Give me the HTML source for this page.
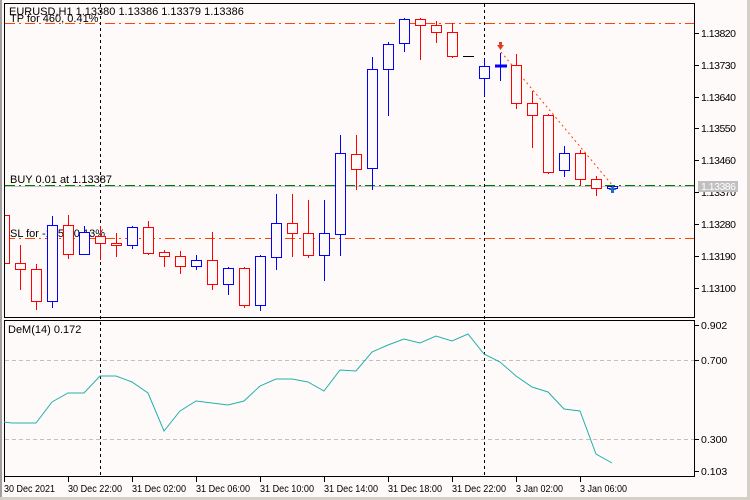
<!DOCTYPE html>
<html><head><meta charset="utf-8"><style>
html,body{margin:0;padding:0;background:#fffafa;}
svg{display:block;font-family:"Liberation Sans",sans-serif;font-size:11px;}
</style></head><body>
<svg width="750" height="500" viewBox="0 0 750 500" xmlns="http://www.w3.org/2000/svg">
<rect x="0" y="0" width="750" height="500" fill="#fffafa"/>
<rect x="0" y="0" width="2" height="500" fill="#a0a0a0"/>
<rect x="747" y="0" width="3" height="500" fill="#d4d0c8"/>
<rect x="0" y="497" width="750" height="3" fill="#d4d0c8"/>
<line x1="5" y1="360.5" x2="695" y2="360.5" stroke="#c0c0c0" stroke-dasharray="4,3"/>
<line x1="5" y1="439.5" x2="695" y2="439.5" stroke="#c0c0c0" stroke-dasharray="4,3"/>
<text x="9" y="15" fill="#000">EURUSD,H1  1.13380 1.13386 1.13379 1.13386</text>
<text x="10" y="22" fill="#000">TP for 460, 0.41%</text>
<text x="10" y="183" fill="#000">BUY 0.01 at 1.13387</text>
<text x="10" y="237" fill="#000">SL for -155, -0.13%</text>
<line x1="5" y1="23.5" x2="695" y2="23.5" stroke="#ff4500" stroke-dasharray="10,4,2,4"/>
<line x1="5" y1="186.5" x2="695" y2="186.5" stroke="#c0c0c0"/>
<line x1="5" y1="185.5" x2="695" y2="185.5" stroke="#008000" stroke-dasharray="10,4,2,4"/>
<line x1="5" y1="238.5" x2="695" y2="238.5" stroke="#ff4500" stroke-dasharray="10,4,2,4"/>
<line x1="100.5" y1="4" x2="100.5" y2="477" stroke="#000" stroke-dasharray="3,3"/>
<line x1="484.5" y1="4" x2="484.5" y2="477" stroke="#000" stroke-dasharray="3,3"/>
<line x1="501" y1="52" x2="613" y2="186" stroke="#ff4500" stroke-dasharray="2,3"/>
<g shape-rendering="crispEdges" fill="#fffafa">
<g stroke="#ff0000">
<line x1="20.5" y1="245" x2="20.5" y2="290"/><rect x="15.5" y="263.5" width="10" height="6"/>
<line x1="36.5" y1="264" x2="36.5" y2="310"/><rect x="31.5" y="269.5" width="10" height="32"/>
<line x1="68.5" y1="215" x2="68.5" y2="259"/><rect x="63.5" y="225.5" width="10" height="29"/>
<line x1="100.5" y1="226" x2="100.5" y2="260"/><rect x="95.5" y="236.5" width="10" height="7"/>
<line x1="116.5" y1="233" x2="116.5" y2="257"/><rect x="111.5" y="243.5" width="10" height="2"/>
<line x1="148.5" y1="221" x2="148.5" y2="255"/><rect x="143.5" y="227.5" width="10" height="26"/>
<line x1="164.5" y1="250" x2="164.5" y2="267"/><rect x="159.5" y="252.5" width="10" height="4"/>
<line x1="180.5" y1="251" x2="180.5" y2="274"/><rect x="175.5" y="256.5" width="10" height="10"/>
<line x1="212.5" y1="232" x2="212.5" y2="290"/><rect x="207.5" y="260.5" width="10" height="24"/>
<line x1="244.5" y1="267" x2="244.5" y2="308"/><rect x="239.5" y="268.5" width="10" height="37"/>
<line x1="292.5" y1="194" x2="292.5" y2="257"/><rect x="287.5" y="223.5" width="10" height="10"/>
<line x1="308.5" y1="200" x2="308.5" y2="258"/><rect x="303.5" y="233.5" width="10" height="22"/>
<line x1="356.5" y1="135" x2="356.5" y2="190"/><rect x="351.5" y="154.5" width="10" height="15"/>
<line x1="420.5" y1="18" x2="420.5" y2="60"/><rect x="415.5" y="19.5" width="10" height="6"/>
<line x1="436.5" y1="21" x2="436.5" y2="43"/><rect x="431.5" y="25.5" width="10" height="7"/>
<line x1="452.5" y1="23" x2="452.5" y2="58"/><rect x="447.5" y="32.5" width="10" height="24"/>
<line x1="516.5" y1="54" x2="516.5" y2="109"/><rect x="511.5" y="65.5" width="10" height="38"/>
<line x1="532.5" y1="91" x2="532.5" y2="148"/><rect x="527.5" y="103.5" width="10" height="12"/>
<line x1="548.5" y1="114" x2="548.5" y2="174"/><rect x="543.5" y="115.5" width="10" height="57"/>
<line x1="580.5" y1="150" x2="580.5" y2="185"/><rect x="575.5" y="153.5" width="10" height="26"/>
<line x1="596.5" y1="176" x2="596.5" y2="196"/><rect x="591.5" y="179.5" width="10" height="9"/>
<rect x="4.5" y="215.5" width="5" height="48"/>
</g>
<g stroke="#0000ff">
<line x1="52.5" y1="216" x2="52.5" y2="308"/><rect x="47.5" y="225.5" width="10" height="76"/>
<line x1="84.5" y1="226" x2="84.5" y2="254"/><rect x="79.5" y="232.5" width="10" height="22"/>
<line x1="132.5" y1="226" x2="132.5" y2="249"/><rect x="127.5" y="227.5" width="10" height="18"/>
<line x1="196.5" y1="255" x2="196.5" y2="270"/><rect x="191.5" y="260.5" width="10" height="6"/>
<line x1="228.5" y1="267" x2="228.5" y2="295"/><rect x="223.5" y="268.5" width="10" height="16"/>
<line x1="260.5" y1="255" x2="260.5" y2="311"/><rect x="255.5" y="256.5" width="10" height="49"/>
<line x1="276.5" y1="194" x2="276.5" y2="270"/><rect x="271.5" y="223.5" width="10" height="34"/>
<line x1="324.5" y1="200" x2="324.5" y2="281"/><rect x="319.5" y="233.5" width="10" height="22"/>
<line x1="340.5" y1="135" x2="340.5" y2="256"/><rect x="335.5" y="153.5" width="10" height="81"/>
<line x1="372.5" y1="57" x2="372.5" y2="190"/><rect x="367.5" y="69.5" width="10" height="99"/>
<line x1="388.5" y1="42" x2="388.5" y2="116"/><rect x="383.5" y="44.5" width="10" height="25"/>
<line x1="404.5" y1="18" x2="404.5" y2="52"/><rect x="399.5" y="19.5" width="10" height="24"/>
<line x1="484.5" y1="59" x2="484.5" y2="96"/><rect x="479.5" y="66.5" width="10" height="12"/>
<line x1="500.5" y1="53" x2="500.5" y2="81"/><rect x="495.5" y="65" width="11" height="2" fill="#0000ff"/>
<line x1="564.5" y1="146" x2="564.5" y2="177"/><rect x="559.5" y="153.5" width="10" height="17"/>
<rect x="607.5" y="186.5" width="10" height="2"/>
</g>
<line x1="463" y1="56.5" x2="474" y2="56.5" stroke="#000"/>
</g>
<path d="M497 45h7l-3.5 5z M499 42h3v4h-3z" fill="#e04020"/>
<path d="M608.5 190h8l-4-4z M611 190h3v3h-3z" fill="#1e6fb5"/>
<g fill="none" stroke="#000" shape-rendering="crispEdges">
<rect x="4.5" y="3.5" width="690" height="314"/>
<rect x="4.5" y="320.5" width="690" height="156"/>
</g>
<g stroke="#000" shape-rendering="crispEdges">
<line x1="695" y1="33.5" x2="699" y2="33.5"/><line x1="695" y1="65.5" x2="699" y2="65.5"/>
<line x1="695" y1="97.5" x2="699" y2="97.5"/><line x1="695" y1="128.5" x2="699" y2="128.5"/>
<line x1="695" y1="160.5" x2="699" y2="160.5"/><line x1="695" y1="192.5" x2="699" y2="192.5"/>
<line x1="695" y1="224.5" x2="699" y2="224.5"/><line x1="695" y1="256.5" x2="699" y2="256.5"/>
<line x1="695" y1="288.5" x2="699" y2="288.5"/>
<line x1="695" y1="325.5" x2="699" y2="325.5"/><line x1="695" y1="360.5" x2="699" y2="360.5"/>
<line x1="695" y1="439.5" x2="699" y2="439.5"/><line x1="695" y1="471.5" x2="699" y2="471.5"/>
</g>
<g fill="#000" font-size="10.5">
<text x="701" y="37" textLength="35">1.13820</text><text x="701" y="69" textLength="35">1.13730</text>
<text x="701" y="101" textLength="35">1.13640</text><text x="701" y="132" textLength="35">1.13550</text>
<text x="701" y="164" textLength="35">1.13460</text><text x="701" y="196" textLength="35">1.13370</text>
<text x="701" y="228" textLength="35">1.13280</text><text x="701" y="260" textLength="35">1.13190</text>
<text x="701" y="292" textLength="35">1.13100</text>
<text x="701" y="329">0.902</text><text x="701" y="364">0.700</text>
<text x="701" y="443">0.300</text><text x="701" y="475">0.103</text>
</g>
<rect x="698" y="181" width="40" height="11" fill="#c0c0c0"/>
<text x="701" y="190" fill="#fff" font-size="10.5" textLength="35">1.13386</text>
<text x="8" y="333" fill="#000">DeM(14) 0.172</text>
<polyline fill="none" stroke="#20b2aa" stroke-width="1" points="4,422 12,423 36,423 52,402 68,393 84,393 100,376 116,376 132,382 148,393 164,431 180,411 196,401 212,403 228,405 244,401 260,386 276,379 292,379 308,382 324,391 340,370 356,371 372,352 388,345 404,339 420,343 436,336 452,341 468,334 484,354 500,362 516,376 532,387 548,392 564,409 580,411 596,454 612,463"/>
<g stroke="#000" shape-rendering="crispEdges">
<line x1="4.5" y1="477" x2="4.5" y2="482"/><line x1="68.5" y1="477" x2="68.5" y2="482"/>
<line x1="132.5" y1="477" x2="132.5" y2="482"/><line x1="196.5" y1="477" x2="196.5" y2="482"/>
<line x1="260.5" y1="477" x2="260.5" y2="482"/><line x1="324.5" y1="477" x2="324.5" y2="482"/>
<line x1="388.5" y1="477" x2="388.5" y2="482"/><line x1="452.5" y1="477" x2="452.5" y2="482"/>
<line x1="516.5" y1="477" x2="516.5" y2="482"/><line x1="580.5" y1="477" x2="580.5" y2="482"/>
</g>
<g fill="#000" font-size="10.5" lengthAdjust="spacingAndGlyphs">
<text x="4" y="492" textLength="51" lengthAdjust="spacingAndGlyphs">30 Dec 2021</text>
<text x="68" y="492" textLength="54" lengthAdjust="spacingAndGlyphs">30 Dec 22:00</text>
<text x="132" y="492" textLength="54" lengthAdjust="spacingAndGlyphs">31 Dec 02:00</text>
<text x="196" y="492" textLength="54" lengthAdjust="spacingAndGlyphs">31 Dec 06:00</text>
<text x="260" y="492" textLength="54" lengthAdjust="spacingAndGlyphs">31 Dec 10:00</text>
<text x="324" y="492" textLength="54" lengthAdjust="spacingAndGlyphs">31 Dec 14:00</text>
<text x="388" y="492" textLength="54" lengthAdjust="spacingAndGlyphs">31 Dec 18:00</text>
<text x="452" y="492" textLength="54" lengthAdjust="spacingAndGlyphs">31 Dec 22:00</text>
<text x="516" y="492" textLength="47" lengthAdjust="spacingAndGlyphs">3 Jan 02:00</text>
<text x="580" y="492" textLength="47" lengthAdjust="spacingAndGlyphs">3 Jan 06:00</text>
</g>
</svg>
</body></html>
